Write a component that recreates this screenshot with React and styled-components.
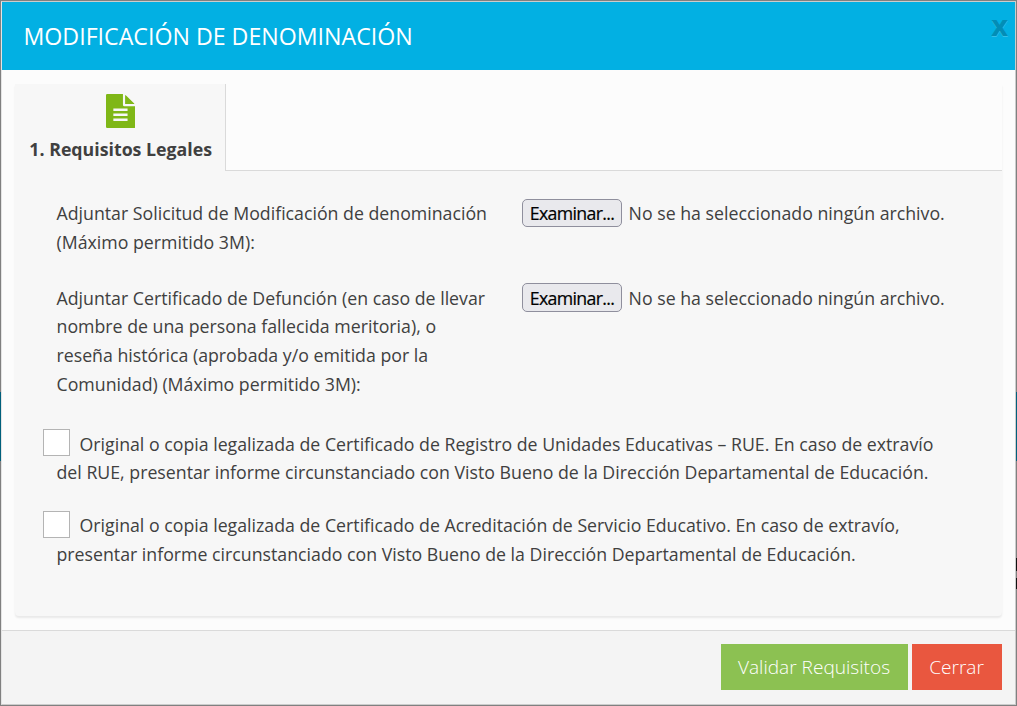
import React from "react";
import styled, { createGlobalStyle } from "styled-components";

const GlobalStyle = createGlobalStyle`
  * { box-sizing: border-box; }
  body {
    margin: 0;
    background: #808080;
    font-family: "Open Sans", "Noto Sans", sans-serif;
    color: #404040;
  }
`;

const Backdrop = styled.div`
  width: 1017px;
  height: 706px;
  padding: 1px;
  background:
    linear-gradient(#111, #111) 100% 558px / 1px 13px no-repeat,
    linear-gradient(#111, #111) 100% 578px / 1px 11px no-repeat,
    linear-gradient(#00607c, #00607c) 0 392px / 100% 69px no-repeat,
    #808080;
`;

const Dialog = styled.section`
  height: 100%;
  display: flex;
  flex-direction: column;
  border: 1px solid #ccc;
  border-left-color: #e4e4e4;
  background: #fcfcfc;
`;

const Header = styled.header`
  height: 68px;
  flex: none;
  display: flex;
  justify-content: space-between;
  padding: 0 7px 0 21.5px;
  background: #02b0e3;
`;

const Title = styled.h1`
  margin: 0;
  font-size: 23.18px;
  line-height: 68px;
  font-weight: 400;
  color: #fff;
`;

const Close = styled.button`
  height: 46px;
  padding: 0;
  border: 0;
  background: none;
  font: 700 29px/46px "Open Sans", sans-serif;
  color: #028db6;
  text-shadow: 0 1px 0 #35c0e9;
`;

const Body = styled.main`
  flex: 1;
  padding: 14px 13px 0;
`;

const Wizard = styled.div`
  height: 532px;
  border-radius: 0 0 4px 4px;
  background: #f7f7f7;
  box-shadow: 0 2px 2px rgba(0, 0, 0, 0.08);
`;

const Tabs = styled.nav`
  height: 87px;
  display: flex;
`;

const Tab = styled.div`
  width: 210px;
  display: flex;
  flex-direction: column;
  align-items: center;
  padding: 10px 0 0 1.4px;
  font-size: 17.75px;
  font-weight: 700;
  line-height: 26px;
  white-space: nowrap;

  svg { display: block; margin-bottom: 8px; }
`;

const TabRest = styled.div`
  flex: 1;
  border-left: 1px solid #dadada;
  border-bottom: 1px solid #dadada;
  background: #fcfcfc;
`;

const Form = styled.form`
  padding: 28px 0 0 41.5px;
  font-size: 17.745px;
  line-height: 28.8px;
  white-space: nowrap;
`;

const FileRow = styled.div`
  display: flex;
  margin-bottom: ${(p) => p.$gap}px;
`;

const Label = styled.label`
  width: 465.5px;
  flex: none;
`;

const FilePicker = styled.div`
  display: flex;
  align-items: flex-start;
  gap: 6.6px;
`;

const Browse = styled.button`
  width: 100px;
  height: 28.7px;
  margin-top: -0.4px;
  padding: 0;
  border: 1px solid #8f8f9d;
  border-radius: 5px;
  background: #e9e9ed;
  color: #000;
  font: 17.73px/26px "Open Sans", sans-serif;
  letter-spacing: -0.65px;
  -webkit-text-stroke: 0.2px #000;
`;

const CheckRow = styled.label`
  display: block;
  margin-bottom: 24.9px;
  line-height: 28.4px;
`;

const Box = styled.input`
  appearance: none;
  display: inline-block;
  width: 27px;
  height: 27px;
  margin: -8px 10px -1px -14px;
  vertical-align: middle;
  border: 1px solid #b4b4b4;
  background: #fff;
`;

const Footer = styled.footer`
  height: 74px;
  flex: none;
  display: flex;
  justify-content: flex-end;
  gap: 4px;
  padding: 13px 13px 0;
  border-top: 1px solid #dadada;
  background: #f4f4f4;
`;

const Action = styled.button`
  width: ${(p) => p.$width}px;
  height: 46px;
  padding: 0 1px 0 0;
  border: 0;
  background: ${(p) => p.$color};
  color: #fff;
  font: 300 19.1px/46px "Open Sans", sans-serif;
`;

const DocumentIcon = () => (
  <svg width="29.4" height="34" viewBox="0 0 30 34" preserveAspectRatio="none" fill="#7fb717" aria-hidden="true">
    <path d="M1.2 0H17.3v10.8a1.5 1.5 0 0 0 1.5 1.5h11.2v20.5a1.2 1.2 0 0 1-1.2 1.2h-27.6A1.2 1.2 0 0 1 0 32.8v-31.6A1.2 1.2 0 0 1 1.2 0Z" />
    <path d="M19.5 1q.9.3 1.5 1l7 6.7q.7.6 1 1.3H19.5Z" />
    <path d="M7.5 15.8H22M7.5 20.8H22M7.5 25.8H22" stroke="#f7f7f7" strokeWidth="2.4" />
  </svg>
);

const FileField = ({ lines, gap }) => (
  <FileRow $gap={gap}>
    <Label>
      {lines.map((line) => <div key={line}>{line}</div>)}
    </Label>
    <FilePicker>
      <Browse type="button">Examinar...</Browse>
      <span>No se ha seleccionado ningún archivo.</span>
    </FilePicker>
  </FileRow>
);

export default function App() {
  return (
    <>
      <GlobalStyle />
      <Backdrop>
        <Dialog role="dialog">
          <Header>
            <Title>MODIFICACIÓN DE DENOMINACIÓN</Title>
            <Close aria-label="Cerrar">x</Close>
          </Header>
          <Body>
            <Wizard>
              <Tabs>
                <Tab><DocumentIcon />1. Requisitos Legales</Tab>
                <TabRest />
              </Tabs>
              <Form>
                <FileField gap={27} lines={[
                  "Adjuntar Solicitud de Modificación de denominación",
                  "(Máximo permitido 3M):",
                ]} />
                <FileField gap={31} lines={[
                  "Adjuntar Certificado de Defunción (en caso de llevar",
                  "nombre de una persona fallecida meritoria), o",
                  "reseña histórica (aprobada y/o emitida por la",
                  "Comunidad) (Máximo permitido 3M):",
                ]} />
                <CheckRow>
                  <Box type="checkbox" />Original o copia legalizada de Certificado de Registro de Unidades Educativas – RUE. En caso de extravío<br />
                  del RUE, presentar informe circunstanciado con Visto Bueno de la Dirección Departamental de Educación.
                </CheckRow>
                <CheckRow>
                  <Box type="checkbox" />Original o copia legalizada de Certificado de Acreditación de Servicio Educativo. En caso de extravío,<br />
                  presentar informe circunstanciado con Visto Bueno de la Dirección Departamental de Educación.
                </CheckRow>
              </Form>
            </Wizard>
          </Body>
          <Footer>
            <Action $width={187} $color="#8cc152">Validar Requisitos</Action>
            <Action $width={90} $color="#e9573f">Cerrar</Action>
          </Footer>
        </Dialog>
      </Backdrop>
    </>
  );
}
